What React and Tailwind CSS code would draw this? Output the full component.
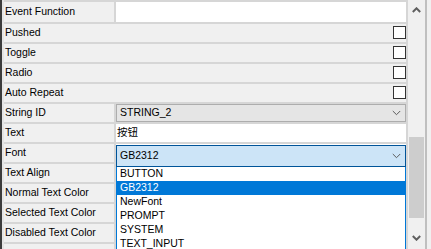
const FONT = "font-['Liberation_Sans','Noto_Sans_CJK_SC',sans-serif]";

const ROWS = [
  { label: 'Event Function', kind: 'input', first: true },
  { label: 'Pushed', kind: 'check' },
  { label: 'Toggle', kind: 'check' },
  { label: 'Radio', kind: 'check' },
  { label: 'Auto Repeat', kind: 'check' },
  { label: 'String ID', kind: 'combo', value: 'STRING_2' },
  { label: 'Text', kind: 'text', value: '按钮' },
  { label: 'Font', kind: 'input' },
  { label: 'Text Align', kind: 'input' },
  { label: 'Normal Text Color', kind: 'input' },
  { label: 'Selected Text Color', kind: 'input' },
  { label: 'Disabled Text Color', kind: 'input' },
  { label: '', kind: 'input' },
];

const FONTS = ['BUTTON', 'GB2312', 'NewFont', 'PROMPT', 'SYSTEM', 'TEXT_INPUT'];

function Chevron({ up = false, bold = false }) {
  return (
    <svg width="9" height="6" viewBox="0 0 9 6" className="block">
      <path
        d={up ? 'M0.8 5 L4.5 1.3 L8.2 5' : 'M0.8 1 L4.5 4.7 L8.2 1'}
        stroke={bold ? '#5f5f5f' : '#5a5a5a'}
        strokeWidth={bold ? 2 : 1}
        fill="none"
      />
    </svg>
  );
}

function Row({ row }) {
  const height = row.first ? 'h-[22px]' : 'h-[20px]';

  if (row.kind === 'check') {
    return (
      <div className={`flex ${height} border-t-2 border-[#d6d6d6] bg-[#f0f0f0]`}>
        <div className="flex flex-1 items-center pb-[1px] pl-[1px]">{row.label}</div>
        <div className="mt-[2px] h-[13px] w-[13px] border border-[#333] bg-white" />
      </div>
    );
  }

  return (
    <div className={`flex ${height} border-t-2 border-[#d6d6d6]`}>
      <div className="flex w-[110px] items-center bg-[#f0f0f0] pb-[1px] pl-[1px] whitespace-nowrap">
        {row.label}
      </div>
      <div className="w-[2px] bg-[#d6d6d6]" />
      {row.kind === 'combo' ? (
        <div className="flex w-[290px] items-center justify-between border border-[#adadad] bg-[#e5e5e5] pl-[3px] pr-[4px]">
          <span>{row.value}</span>
          <Chevron />
        </div>
      ) : (
        <div className="flex w-[290px] items-center bg-white pl-[1px]">{row.value}</div>
      )}
    </div>
  );
}

export default function App() {
  return (
    <div className={`relative h-[249px] w-[431px] overflow-hidden bg-[#f0f0f0] text-[10.5px] text-black ${FONT}`}>
      <div className="flex h-full">
        <div className="w-[2px] bg-[#3c3c3c]" />
        <div className="flex w-[425px] flex-col">
          <div className="h-[3px] bg-[#2b2b2b]" />
          <div className="flex flex-1">
            <div className="w-[2px] bg-[#e4e4e4]" />

            {/* property rows */}
            <div className="w-[402px]">
              {ROWS.map((row, i) => (
                <Row key={i} row={row} />
              ))}
            </div>

            <div className="w-[2px] bg-[#d6d6d6]" />

            {/* scrollbar */}
            <div className="flex w-[17px] flex-col bg-[#f0f0f0]">
              <div className="flex h-[20px] items-center justify-center">
                <Chevron up bold />
              </div>
              <div className="mx-[1px] mt-[117px] h-[81px] bg-[#cdcdcd]" />
              <div className="mt-[10px] flex h-[20px] items-center justify-center">
                <Chevron bold />
              </div>
            </div>

            <div className="w-[2px] bg-[#bfbfbf]" />
          </div>
        </div>
        <div className="flex-1 bg-[#f0f0f0]" />
      </div>

      {/* open font dropdown */}
      <div className="absolute left-[116px] top-[145px] w-[290px]">
        <div className="flex h-[22px] items-center justify-between border border-[#005499] bg-[#cce4f7] pl-[3px] pr-[4px]">
          <span>GB2312</span>
          <Chevron />
        </div>
        <div className="h-[90px] border-x border-[#0078d7] bg-white">
          {FONTS.map((f) => (
            <div
              key={f}
              className={`flex h-[14px] items-center pl-[3px] ${f === 'GB2312' ? 'bg-[#0078d7] text-white' : ''}`}
            >
              {f}
            </div>
          ))}
        </div>
      </div>
    </div>
  );
}
